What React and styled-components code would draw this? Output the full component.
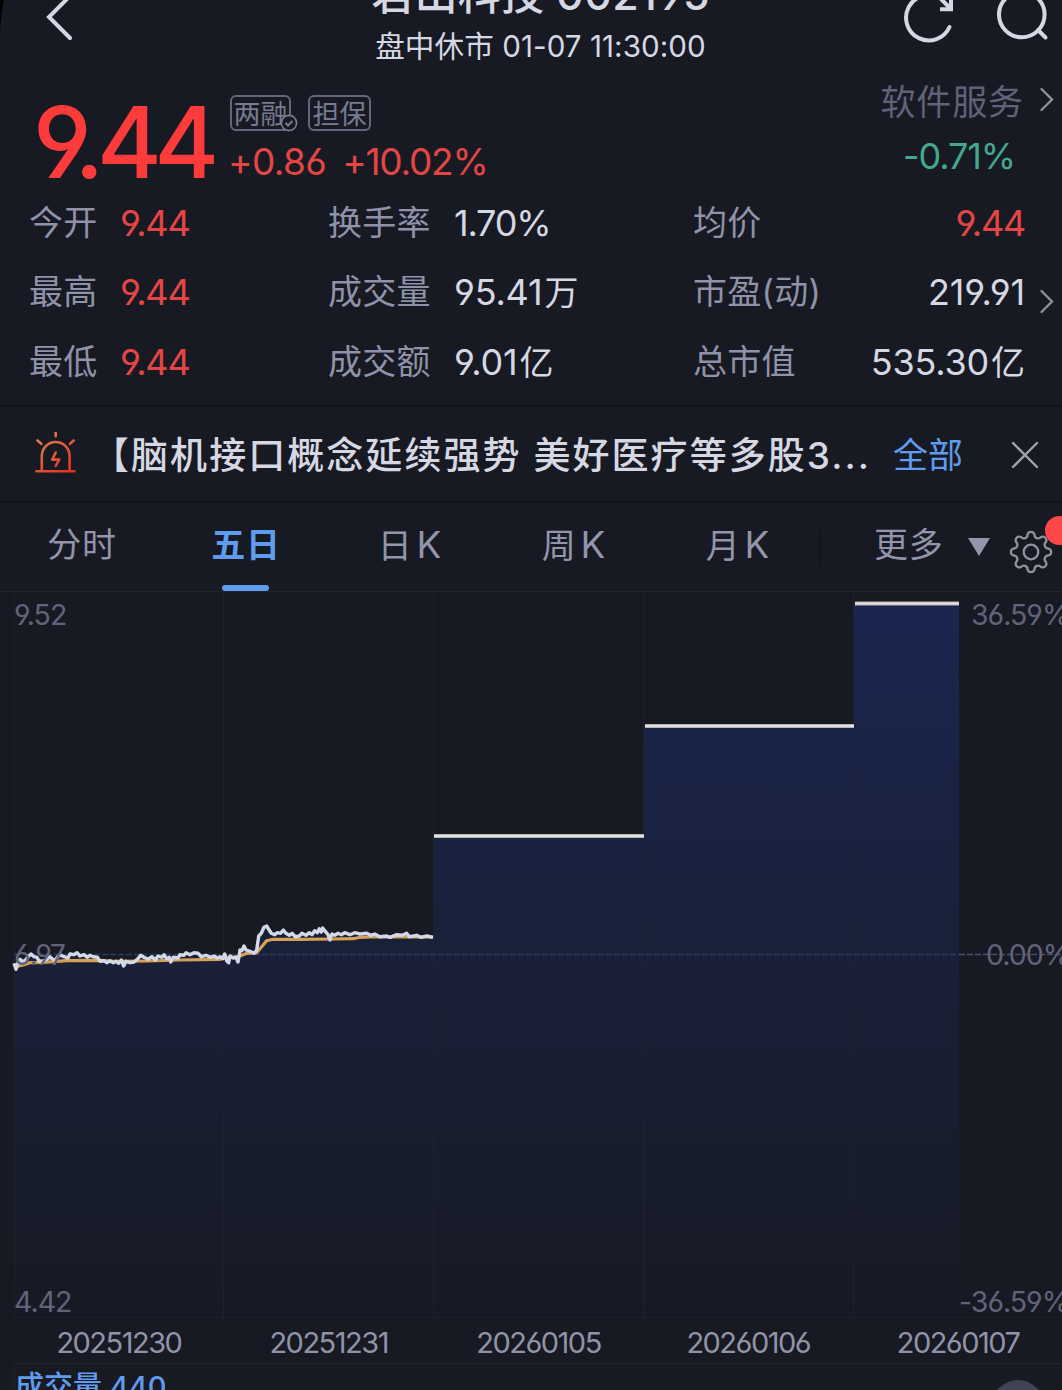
import styled, { createGlobalStyle } from "styled-components";

const GlobalStyle = createGlobalStyle`
    * {
        box-sizing: border-box;
    }
    body {
        margin: 0;
        background-color: #171a22;
        overflow: hidden;
    }
`;

const Page = styled.div`
    width: 1062px;
    height: 1390px;
    overflow: hidden;
    background-color: #171a22;
    color: #d5d8e3;
    font-family: Inter, "Noto Sans CJK SC", sans-serif;
    font-feature-settings: "cv03", "cv04", "calt" 0;
    white-space: nowrap;
`;

const Header = styled.header`
    position: relative;
    height: 80px;
    overflow: hidden;
    display: flex;
    justify-content: space-between;

    .corner {
        position: absolute;
        top: 0;
        left: 0;
    }

    .titles {
        width: 342px;
        margin: -33px 0 0 -3px;
        text-align: center;
    }

    .title {
        height: 57px;
        line-height: 54px;
        font-size: 43px;
        font-weight: 450;
        letter-spacing: 0.3px;
    }

    .subtitle {
        height: 44px;
        line-height: 44px;
        font-size: 29.6px;
        letter-spacing: 0.05px;
    }
`;

const Quote = styled.section`
    height: 108px;
    padding: 0 8px 0 33px;
    display: flex;

    .side {
        width: 300px;
        padding-top: 15px;
    }
`;

const Price = styled.div`
    width: 197px;
    line-height: 124px;
    font-size: 99px;
    font-weight: 450;
    letter-spacing: -7.5px;
    color: #fe3b3b;
`;

const Tags = styled.div`
    display: flex;
    gap: 17px;
    height: 37px;
`;

const Tag = styled.span`
    position: relative;
    width: ${(props) => props.$width}px;
    height: 36px;
    border: 2px solid #64677c;
    border-radius: 6px;
    line-height: 35px;
    font-size: 27px;
    text-align: center;
    color: #777a91;

    svg {
        position: absolute;
        right: -9px;
        bottom: -3px;
    }
`;

const Change = styled.div`
    display: flex;
    gap: 16px;
    margin-left: -2px;
    line-height: 60px;
    font-size: 37px;
    letter-spacing: -1.2px;
    color: #e64545;

    .amount {
        letter-spacing: -0.6px;
    }
`;

const Sector = styled.div`
    margin-left: auto;
    display: flex;
    align-items: flex-start;

    .name {
        line-height: 44px;
        font-size: 35px;
        letter-spacing: 0.9px;
        color: #5f6278;
    }

    .percent {
        line-height: 65px;
        font-size: 36px;
        letter-spacing: -1.1px;
        padding-right: 9px;
        text-align: right;
        color: #43a88e;
    }

    svg {
        margin: 7px 0 0 15px;
    }
`;

const Stats = styled.section`
    position: relative;
    height: 217px;
    padding-left: 29px;
    display: grid;
    grid-template-columns: 91px 208px 126px 239px 132px 200px;
    grid-template-rows: repeat(3, 69.3px);

    svg {
        position: absolute;
        left: 1039px;
        top: 101px;
    }
`;

const Label = styled.span`
    line-height: 69px;
    font-size: 34px;
    letter-spacing: 0.3px;
    color: #8f92a8;
`;

const Value = styled.span`
    line-height: 70px;
    font-size: 36px;
    font-weight: 430;
    letter-spacing: ${(props) => (props.$wide ? -0.2 : -1.2)}px;
    text-align: ${(props) => (props.$right ? "right" : "left")};
    color: ${(props) => (props.$up ? "#e64545" : "#d5d8e3")};

    .unit {
        margin-left: 2px;
        font-size: 34px;
        letter-spacing: 0;
    }
`;

const News = styled.section`
    height: 98px;
    padding: 0 23px 0 34px;
    border-top: 2px solid #12141b;
    border-bottom: 2px solid #12141b;
    display: flex;
    align-items: center;

    svg {
        flex-shrink: 0;
    }

    .siren {
        margin-bottom: 4px;
    }

    .headline {
        flex-shrink: 0;
        width: 801px;
        height: 94px;
        margin-left: 14px;
        font-size: 37px;
        font-weight: 500;
        letter-spacing: 2.05px;
        line-height: 98px;
    }

    .all {
        flex-shrink: 0;
        width: 118px;
        height: 94px;
        font-size: 35px;
        line-height: 96px;
        color: #5f9cf0;
    }

    .close {
        margin-top: 2px;
    }
`;

const Tabs = styled.nav`
    position: relative;
    height: 89px;
    border-bottom: 1px solid #20232e;
    display: flex;

    .divider {
        width: 1px;
        height: 38px;
        margin-top: 26px;
        background-color: #10121a;
    }

    .more {
        display: flex;
        padding-left: 53px;
        line-height: 83px;
        font-size: 34px;
        letter-spacing: 0.8px;
        color: #9295ab;
    }

    .more svg {
        margin: 35px 0 0 24px;
    }

    .gear {
        position: absolute;
        left: 1007px;
        top: 25px;
    }

    .dot {
        position: absolute;
        left: 1045px;
        top: 13px;
        width: 29px;
        height: 29px;
        border-radius: 50%;
        background-color: #ff4747;
    }
`;

const Tab = styled.div`
    position: relative;
    width: 164px;
    height: 88px;
    text-align: center;
    line-height: 83px;
    font-size: 34px;
    letter-spacing: 0.8px;
    font-weight: ${(props) => (props.$active ? 700 : 400)};
    color: ${(props) => (props.$active ? "#5f9cf0" : "#9295ab")};

    .latin {
        margin-left: 4px;
        font-size: 37px;
    }

    &::after {
        content: "";
        position: absolute;
        left: 58px;
        bottom: 0;
        width: 47px;
        height: 6px;
        border-radius: 3px;
        background-color: ${(props) => (props.$active ? "#5f9cf0" : "transparent")};
    }
`;

const ChartSvg = styled.svg`
    display: block;

    text {
        font-size: 28.5px;
        letter-spacing: -1px;
        fill: #616479;
    }
`;

const Dates = styled.div`
    height: 45px;
    padding-left: 14px;
    display: grid;
    grid-template-columns: repeat(5, 209.8px);
    line-height: 50px;
    font-size: 29px;
    letter-spacing: -1.5px;
    text-align: center;
    color: #9194a8;
`;

const Volume = styled.section`
    height: 28px;
    margin-left: 14px;
    border-top: 1px solid #20232e;
    border-left: 1px solid #20232e;
    display: flex;
    justify-content: space-between;
    overflow: hidden;

    .text {
        line-height: 45px;
        font-size: 29px;
        font-weight: 500;
        color: #5f9cf0;
    }

    .handle {
        width: 52px;
        height: 52px;
        margin: 16px 18px 0 0;
        flex-shrink: 0;
        border-radius: 50%;
        background-color: #404354;
    }
`;

const stats = [
    ["今开", "9.44", "换手率", "1.70%", "均价", "9.44"],
    ["最高", "9.44", "成交量", "95.41万", "市盈(动)", "219.91"],
    ["最低", "9.44", "成交额", "9.01亿", "总市值", "535.30亿"],
];

const tabs = ["分时", "五日", "日K", "周K", "月K"];
const dates = ["20251230", "20251231", "20260105", "20260106", "20260107"];

// [x, y] pairs, in thirds of a pixel
const priceLine = [
    42,190, 48,208, 54,188, 60,178, 66,184, 75,182, 84,170, 93,162, 102,170, 111,172, 117,184, 132,182, 141,178, 150,170,
    156,176, 165,182, 172,172, 180,164, 192,170, 204,174, 210,162, 222,164, 231,158, 240,168, 252,164, 262,172, 270,166,
    280,170, 292,172, 300,184, 312,182, 320,188, 330,182, 340,188, 348,184, 356,190, 364,180, 371,198, 378,184, 390,188,
    402,186, 412,178, 422,166, 432,172, 444,178, 456,170, 466,180, 474,168, 486,172, 492,164, 500,176, 508,172, 512,186,
    520,172, 534,174, 540,164, 552,166, 558,158, 570,164, 582,158, 594,160, 604,170, 618,166, 630,172, 642,168, 652,174,
    660,170, 668,176, 674,162, 680,182, 686,188, 690,168, 700,174, 708,172, 714,186, 720,150, 726,152, 732,138, 738,150,
    750,154, 762,160, 770,150, 776,108, 784,100, 792,82, 800,78, 806,88, 814,100, 824,104, 832,98, 842,100, 850,90,
    858,100, 868,106, 876,100, 886,110, 898,108, 906,100, 918,106, 928,98, 936,104, 944,92, 952,98, 958,86, 964,96,
    968,84, 974,92, 984,104, 990,120, 996,102, 1004,106, 1014,100, 1024,104, 1034,98, 1050,104, 1064,98, 1080,102,
    1100,100, 1112,106, 1124,102, 1140,110, 1160,108, 1170,112, 1190,104, 1206,106, 1220,100, 1228,110, 1250,106,
    1262,112, 1280,108, 1299,112,
];

const averageLine = [
    42,196, 54,198, 72,194, 90,188, 130,187, 200,182, 300,181, 340,184, 440,183, 540,180, 660,178, 672,174, 700,172,
    720,168, 740,160, 770,158, 780,146, 800,122, 820,118, 900,118, 1000,117, 1060,116, 1080,112, 1110,111, 1299,111,
];

const toPath = (list) => {
    const points = [];
    for (let i = 0; i < list.length; i += 2) {
        points.push(`${(list[i] / 3).toFixed(1)} ${(308 + list[i + 1] / 3).toFixed(1)}`);
    }
    return `M${points.join("L")}`;
};

const gearPath = () => {
    const at = (deg, r) => {
        const rad = (deg * Math.PI) / 180;
        return `${(24 + r * Math.cos(rad)).toFixed(2)} ${(24 + r * Math.sin(rad)).toFixed(2)}`;
    };
    let d = `M${at(-11, 18)}`;
    for (let i = 0; i < 8; i++) {
        d += `A3.6 3.6 0 0 1 ${at(i * 45 + 11, 18)}`;
        d += `A3.8 3.8 0 0 0 ${at(i * 45 + 34, 18)}`;
    }
    return d + "Z";
};

const Chevron = () => (
    <svg width="15" height="25" viewBox="0 0 15 25" fill="none" stroke="#8d8f9b" strokeWidth="2.4" strokeLinecap="round">
        <path d="M2.5 2L13 12.5L2.5 23" />
    </svg>
);

const Siren = () => (
    <svg className="siren" width="44" height="44" viewBox="0 0 44 44" fill="none" stroke="url(#siren)" strokeWidth="2.6" strokeLinecap="round" strokeLinejoin="round">
        <defs>
            <linearGradient id="siren" gradientUnits="userSpaceOnUse" x1="8" y1="4" x2="36" y2="42">
                <stop offset="0" stopColor="#df8050" />
                <stop offset="1" stopColor="#e2321c" />
            </linearGradient>
        </defs>
        <path d="M2.5 41.2H40.5M7.8 41V26A13.9 14 0 0 1 35.6 26V41" />
        <path d="M21.7 3V6.3M3.5 10.5L7.3 13.8M39.7 10.5L36 13.8" />
        <path d="M21.7 22.5L18.2 29.6H25.2L21.7 36" strokeWidth="2.6" />
    </svg>
);

const Amount = ({ text }) => {
    const unit = /[万亿]$/.test(text) ? text.slice(-1) : "";
    return (
        <>
            {unit ? text.slice(0, -1) : text}
            {unit && <span className="unit">{unit}</span>}
        </>
    );
};

const Chart = () => {
    const price = toPath(priceLine);
    return (
        <ChartSvg width="1062" height="726" viewBox="0 0 1062 726">
            <defs>
                <linearGradient id="fill" gradientUnits="userSpaceOnUse" x1="0" y1="12" x2="0" y2="726">
                    <stop offset="0" stopColor="#1a2650" />
                    <stop offset="0.5" stopColor="#192038" />
                    <stop offset="1" stopColor="#171a24" />
                </linearGradient>
            </defs>
            <path d={`${price}V244H644V134H854V12H959V726H14Z`} fill="url(#fill)" />
            <path d="M14.5 0V726M223.5 0V726M433.5 0V726M643.5 0V726M853.5 0V726M14 725.5H1062" stroke="#20232e" opacity="0.8" />
            <path d="M14 362.5H959" stroke="#2c3a60" strokeWidth="1.6" strokeDasharray="6 2" />
            <path d="M959 362.5H1062" stroke="#41506e" strokeWidth="1.6" strokeDasharray="6 2" />
            <path d={toPath(averageLine)} fill="none" stroke="#d6a154" strokeWidth="3.2" />
            <path d={price} fill="none" stroke="#d3d9e9" strokeWidth="3.4" strokeLinejoin="round" />
            <path d="M434 244H644M645 134H854M855 11.5H959" stroke="#bdb5a9" strokeWidth="4.2" />
            <path d="M434 244H644M645 134H854M855 11.5H959" stroke="#dfe1e8" strokeWidth="2.2" />
            <text x="14" y="33">9.52</text>
            <text x="14" y="373">6.97</text>
            <text x="14" y="720">4.42</text>
            <text x="971" y="33">36.59%</text>
            <text x="986" y="373">0.00%</text>
            <text x="959" y="720">-36.59%</text>
        </ChartSvg>
    );
};

const App = () => {
    return (
        <Page>
            <GlobalStyle />
            <Header>
                <svg className="corner" width="5" height="32"><path d="M0 0H4Q1 12 0 32Z" fill="#000" /></svg>
                <svg width="368" height="80" fill="none" stroke="#d5d8e3" strokeWidth="4" strokeLinecap="round">
                    <path d="M70 -4L49 17L70 38" />
                </svg>
                <div className="titles">
                    <div className="title">君山科技 002195</div>
                    <div className="subtitle">盘中休市 01-07 11:30:00</div>
                </div>
                <svg width="346" height="80" viewBox="716 0 346 80" fill="none" stroke="#d5d8e3" strokeWidth="4" strokeLinecap="round">
                    <path d="M949.5 27A22.7 22.7 0 1 1 940 -2" />
                    <path d="M939 -3L950 8M940 9.2H951V0" strokeLinecap="butt" />
                    <circle cx="1021.8" cy="14.5" r="22.8" />
                    <path d="M1038 30L1045.5 37.5" />
                </svg>
            </Header>
            <Quote>
                <Price>9.44</Price>
                <div className="side">
                    <Tags>
                        <Tag $width={61}>
                            两融
                            <svg width="18" height="18" viewBox="0 0 18 18" fill="none" stroke="#777a91" strokeWidth="1.6">
                                <circle cx="9" cy="9" r="7.6" fill="#171a22" />
                                <path d="M5.5 9L8 11.5L12.5 7" strokeWidth="2" />
                            </svg>
                        </Tag>
                        <Tag $width={63}>担保</Tag>
                    </Tags>
                    <Change><span className="amount">+0.86</span><span>+10.02%</span></Change>
                </div>
                <Sector>
                    <div>
                        <div className="name">软件服务</div>
                        <div className="percent">-0.71%</div>
                    </div>
                    <Chevron />
                </Sector>
            </Quote>
            <Stats>
                {stats.map((row, i) => [
                    <Label key={`a${i}`}>{row[0]}</Label>,
                    <Value key={`b${i}`} $up>{row[1]}</Value>,
                    <Label key={`c${i}`}>{row[2]}</Label>,
                    <Value key={`d${i}`} $wide={i > 0}><Amount text={row[3]} /></Value>,
                    <Label key={`e${i}`}>{row[4]}</Label>,
                    <Value key={`f${i}`} $right $wide={i > 0} $up={i === 0}><Amount text={row[5]} /></Value>,
                ])}
                <Chevron />
            </Stats>
            <News>
                <Siren />
                <span className="headline">【脑机接口概念延续强势 美好医疗等多股3...</span>
                <span className="all">全部</span>
                <svg className="close" width="28" height="28" viewBox="0 0 28 28" fill="none" stroke="#a0a2ad" strokeWidth="2.4" strokeLinecap="round">
                    <path d="M2 2L26 26M26 2L2 26" />
                </svg>
            </News>
            <Tabs>
                {tabs.map((name, i) => (
                    <Tab key={name} $active={i === 1}>
                        {name.replace("K", "")}
                        {name.endsWith("K") && <span className="latin">K</span>}
                    </Tab>
                ))}
                <span className="divider" />
                <div className="more">
                    更多
                    <svg width="22" height="18" viewBox="0 0 22 18"><path d="M0 0H22L11 18Z" fill="#9295ab" /></svg>
                </div>
                <svg className="gear" width="48" height="48" viewBox="0 0 48 48" fill="none" stroke="#8f929d" strokeWidth="2.3">
                    <path d={gearPath()} />
                    <circle cx="24" cy="24" r="7.3" />
                </svg>
                <span className="dot" />
            </Tabs>
            <Chart />
            <Dates>
                {dates.map((date) => <span key={date}>{date}</span>)}
            </Dates>
            <Volume>
                <span className="text">成交量 440</span>
                <span className="handle" />
            </Volume>
        </Page>
    );
};

export default App;
